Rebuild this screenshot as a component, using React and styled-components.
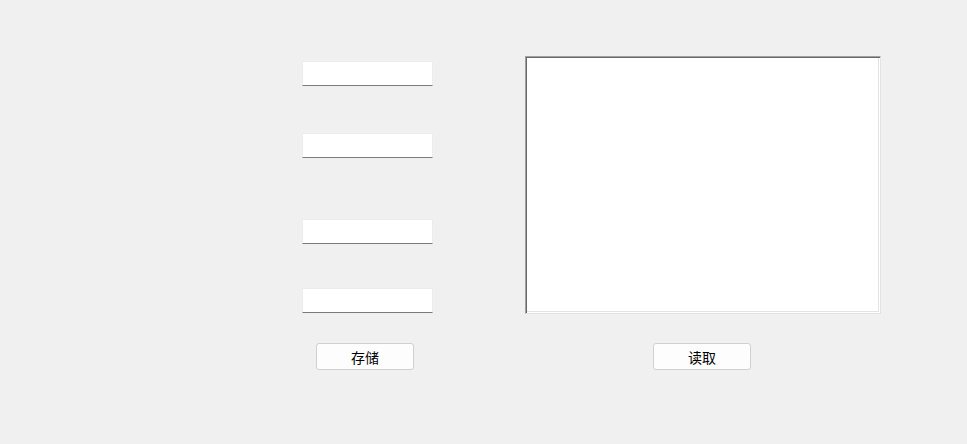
import React from "react";
import styled, { createGlobalStyle } from "styled-components";

const GlobalStyle = createGlobalStyle`
  html, body {
    margin: 0;
    padding: 0;
    background: #f0f0f0;
  }
  body {
    font-family: "Noto Sans CJK SC", "Liberation Sans", sans-serif;
  }
`;

const Window = styled.div`
  width: 967px;
  height: 444px;
  background: #f0f0f0;
  box-sizing: border-box;
  padding-top: 56px;
`;

const Panels = styled.div`
  display: flex;
  align-items: flex-start;
  padding-left: 302px;
`;

const FieldColumn = styled.div`
  display: flex;
  flex-direction: column;
  width: 131px;
`;

const Field = styled.input`
  box-sizing: border-box;
  width: 131px;
  height: 25px;
  margin: ${(p) => p.$top}px 0 0;
  padding: 0 4px;
  background: #fff;
  border: 1px solid #ececec;
  border-bottom: 1px solid #7a7a7a;
  outline: none;
  font-size: 13px;
`;

const Memo = styled.textarea`
  box-sizing: border-box;
  width: 356px;
  height: 258px;
  margin-left: 92px;
  padding: 2px;
  resize: none;
  background: #fff;
  border: 1px solid;
  border-color: #a0a0a0 #e3e3e3 #e3e3e3 #a0a0a0;
  box-shadow: inset 1px 1px 0 #696969, inset -1px -1px 0 #fff,
    inset -2px -2px 0 #e3e3e3;
  outline: none;
`;

const ButtonRow = styled.div`
  display: flex;
  padding-left: 316px;
  margin-top: 29px;
`;

const Button = styled.button`
  box-sizing: border-box;
  width: 98px;
  height: 27px;
  margin-left: ${(p) => p.$offset || 0}px;
  padding: 0;
  background: #fdfdfd;
  border: 1px solid #d0d0d0;
  border-radius: 3px;
  color: #000;
  font-family: "Noto Sans CJK SC", "Liberation Sans", sans-serif;
  font-size: 14px;
  font-weight: 400;
  line-height: 22px;
`;

export default function App() {
  return (
    <>
      <GlobalStyle />
      <Window>
        <Panels>
          <FieldColumn>
            <Field $top={5} />
            <Field $top={47} />
            <Field $top={61} />
            <Field $top={44} />
          </FieldColumn>
          <Memo />
        </Panels>
        <ButtonRow>
          <Button>存储</Button>
          <Button $offset={239}>读取</Button>
        </ButtonRow>
      </Window>
    </>
  );
}
